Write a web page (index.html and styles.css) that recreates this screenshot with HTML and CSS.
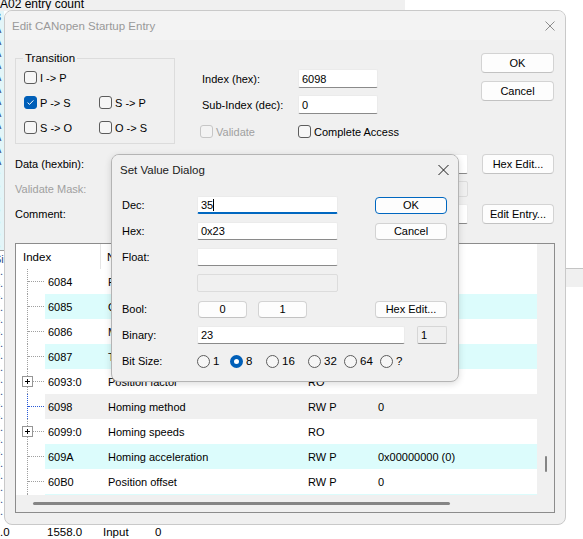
FILE: index.html
```html
<!DOCTYPE html>
<html lang="en">
<head>
    <meta charset="UTF-8">
    <title>Edit CANopen Startup Entry</title>
    <link rel="stylesheet" href="styles.css">
</head>
<body>
<div class="desktop">

    <!-- bits of the window behind the dialogs -->
    <div class="bg-top">A02 entry count</div>
    <div class="bg-strip">
        <div class="bg-strip-hi">
            <div>B</div><div>A</div><div>A</div><div>A</div><div>A</div><div>A</div><div>A</div><div>A</div><div>A</div><div>A</div>
            <div>A</div><div>A</div><div>A</div><div>e</div><div>6</div><div>6</div><div>6</div><div>6</div><div>6</div><div>6</div>
        </div>
        <div class="bg-strip-lo">
            <div>Si</div><div>2.</div><div>4.</div><div>4.</div><div>2.</div><div>4.</div><div>4.</div><div>0.</div><div>0.</div><div>2.</div>
            <div>3.</div><div>2.</div><div>4.</div><div>4.</div><div>2.</div><div>4.</div><div>4.</div><div>0.</div><div>0.</div><div>2.</div>
            <div>3.</div><div>2.</div>
        </div>
    </div>
    <div class="bg-band"></div>
    <div class="bg-status">
        <span class="st-1">.0</span><span class="st-2">1558.0</span><span class="st-3">Input</span><span>0</span>
    </div>

    <!-- Edit CANopen Startup Entry -->
    <div class="window main-win">
        <div class="titlebar">
            <span class="title">Edit CANopen Startup Entry</span>
            <svg class="close" width="10" height="10" viewBox="0 0 10 10"><path d="M0.5 0.5L9.5 9.5M9.5 0.5L0.5 9.5"/></svg>
        </div>

        <div class="top">
            <fieldset class="group">
                <legend>Transition</legend>
                <div class="trans-grid">
                    <span class="chk"><span class="box"></span>I -&gt; P</span>
                    <span></span>
                    <span class="chk"><span class="box on"><svg width="11" height="11" viewBox="0 0 11 11"><path d="M2.6 5.6L4.5 7.4L8.4 3.4"/></svg></span>P -&gt; S</span>
                    <span class="chk"><span class="box"></span>S -&gt; P</span>
                    <span class="chk"><span class="box"></span>S -&gt; O</span>
                    <span class="chk"><span class="box"></span>O -&gt; S</span>
                </div>
            </fieldset>

            <div class="fields">
                <span class="lbl">Index (hex):</span>
                <div class="edit">6098</div>
                <span class="lbl">Sub-Index (dec):</span>
                <div class="edit">0</div>
                <span class="chk disabled chk-row"><span class="box"></span>Validate</span>
                <span class="chk chk-row"><span class="box"></span>Complete Access</span>
            </div>

            <div class="btn-col">
                <button class="btn">OK</button>
                <button class="btn">Cancel</button>
            </div>
        </div>

        <div class="data-grid">
            <span class="lbl-s">Data (hexbin):</span>
            <div class="edit"></div>
            <button class="btn">Hex Edit...</button>
            <span class="lbl-s muted">Validate Mask:</span>
            <div class="edit off"></div>
            <span></span>
            <span class="lbl-s">Comment:</span>
            <div class="edit"></div>
            <button class="btn">Edit Entry...</button>
        </div>

        <div class="list">
            <div class="list-body">
                <div class="rows-area">
                    <div class="list-head">
                        <span class="h-idx">Index</span>
                        <span class="h-name">Name</span>
                        <span class="h-flags">Flags</span>
                        <span>Value</span>
                    </div>
                    <div class="row">
                        <span class="tree"></span>
                        <div class="cells"><span class="c-idx">6084</span><span class="c-name">Profile deceleration</span><span class="c-flags">RW P</span><span>0</span></div>
                    </div>
                    <div class="row cyan">
                        <span class="tree"></span>
                        <div class="cells"><span class="c-idx">6085</span><span class="c-name">Quick stop deceleration</span><span class="c-flags">RW P</span><span>0</span></div>
                    </div>
                    <div class="row">
                        <span class="tree"></span>
                        <div class="cells"><span class="c-idx">6086</span><span class="c-name">Motion profile type</span><span class="c-flags">RW P</span><span>0</span></div>
                    </div>
                    <div class="row cyan">
                        <span class="tree"></span>
                        <div class="cells"><span class="c-idx">6087</span><span class="c-name">Torque slope</span><span class="c-flags">RW P</span><span>0</span></div>
                    </div>
                    <div class="row">
                        <span class="tree"><svg class="plus" width="11" height="11" viewBox="0 0 11 11"><rect x="0.5" y="0.5" width="10" height="10"/><path d="M3 5.5H8M5.5 3V8"/></svg></span>
                        <div class="cells"><span class="c-idx">6093:0</span><span class="c-name">Position factor</span><span class="c-flags">RO</span><span></span></div>
                    </div>
                    <div class="row sel">
                        <span class="tree"></span>
                        <div class="cells"><span class="c-idx">6098</span><span class="c-name">Homing method</span><span class="c-flags">RW P</span><span>0</span></div>
                    </div>
                    <div class="row">
                        <span class="tree"><svg class="plus" width="11" height="11" viewBox="0 0 11 11"><rect x="0.5" y="0.5" width="10" height="10"/><path d="M3 5.5H8M5.5 3V8"/></svg></span>
                        <div class="cells"><span class="c-idx">6099:0</span><span class="c-name">Homing speeds</span><span class="c-flags">RO</span><span></span></div>
                    </div>
                    <div class="row cyan">
                        <span class="tree"></span>
                        <div class="cells"><span class="c-idx">609A</span><span class="c-name">Homing acceleration</span><span class="c-flags">RW P</span><span>0x00000000 (0)</span></div>
                    </div>
                    <div class="row">
                        <span class="tree"></span>
                        <div class="cells"><span class="c-idx">60B0</span><span class="c-name">Position offset</span><span class="c-flags">RW P</span><span>0</span></div>
                    </div>
                    <div class="row cyan">
                        <span class="tree"></span>
                        <div class="cells"><span class="c-idx">60C2:0</span><span class="c-name">Interpolation time period</span><span class="c-flags">RO</span><span></span></div>
                    </div>
                </div>
                <div class="vscroll"><span class="vthumb"></span></div>
            </div>
            <div class="hscroll"><span class="hthumb"></span></div>
        </div>
    </div>

    <!-- Set Value Dialog -->
    <div class="window setval">
        <div class="titlebar active">
            <span class="title">Set Value Dialog</span>
            <svg class="close" width="11" height="10" viewBox="0 0 11 10"><path d="M0.5 0L10.5 10M10.5 0L0.5 10"/></svg>
        </div>
        <div class="sv-grid">
            <span class="lbl-s">Dec:</span>
            <div class="edit focus">35<span class="caret"></span></div>
            <span></span>
            <button class="btn default">OK</button>

            <span class="lbl-s">Hex:</span>
            <div class="edit">0x23</div>
            <span></span>
            <button class="btn">Cancel</button>

            <span class="lbl-s">Float:</span>
            <div class="edit"></div>
            <span></span><span></span>

            <span></span>
            <div class="edit off"></div>
            <span></span><span></span>

            <span class="lbl-s">Bool:</span>
            <div class="bool-btns"><button class="btn">0</button><button class="btn">1</button></div>
            <span></span>
            <button class="btn">Hex Edit...</button>

            <span class="lbl-s">Binary:</span>
            <div class="binary"><div class="edit bin-edit">23</div><div class="edit ro">1</div></div>

            <span class="lbl-s">Bit Size:</span>
            <div class="radios">
                <span class="rad w33"><span class="dot"></span>1</span>
                <span class="rad w36"><span class="dot on"></span>8</span>
                <span class="rad w42"><span class="dot"></span>16</span>
                <span class="rad w36"><span class="dot"></span>32</span>
                <span class="rad w36"><span class="dot"></span>64</span>
                <span class="rad"><span class="dot"></span>?</span>
            </div>
        </div>
    </div>

</div>
</body>
</html>
```

FILE: styles.css
```css
* {
    box-sizing: border-box;
}
body {
    margin: 0;
    background: #fff;
    font-family: "Liberation Sans", Arial, sans-serif;
    font-size: 11px;
    color: #000;
}
.desktop {
    position: relative;
    width: 583px;
    height: 539px;
    overflow: hidden;
}

/* background window */
.bg-top {
    position: absolute;
    left: 0;
    top: 0;
    width: 405px;
    height: 11px;
    background: #f0f0f0;
    font-size: 12px;
    line-height: 8px;
    white-space: nowrap;
}
.bg-strip {
    position: absolute;
    left: 0;
    top: 11px;
    width: 4px;
    height: 514px;
    overflow: hidden;
    line-height: 12px;
    color: #2b4c86;
}
.bg-strip div {
    margin-left: -3px;
    white-space: nowrap;
}
.bg-strip-hi {
    background: #e3f5f8;
    height: 240px;
    border-bottom: 1px solid #a0a0a0;
}
.bg-strip-lo {
    padding-top: 2px;
}
.bg-band {
    position: absolute;
    left: 566px;
    top: 268px;
    width: 17px;
    height: 19px;
    background: #f0f0f0;
    border-top: 1px solid #c4c4c4;
}
.bg-status {
    position: absolute;
    left: 0;
    top: 525px;
    height: 14px;
    line-height: 14px;
    font-size: 11.5px;
    display: flex;
    white-space: nowrap;
}
.st-1 { width: 47px; }
.st-2 { width: 56px; }
.st-3 { width: 52px; }

/* windows */
.window {
    position: absolute;
    background: #f0f0f0;
    border: 1px solid #c9c9c9;
    border-radius: 8px;
    overflow: hidden;
}
.main-win {
    left: 4px;
    top: 10px;
    width: 562px;
    height: 515px;
}
.setval {
    left: 111px;
    top: 154px;
    width: 348px;
    height: 228px;
    border-color: #b4b4b4;
    box-shadow: 0 2px 7px rgba(0, 0, 0, 0.14);
}
.titlebar {
    height: 29px;
    display: flex;
    align-items: center;
    justify-content: space-between;
    background: #f3f3f3;
    padding: 0 10px 0 7px;
}
.titlebar .title {
    font-size: 11.5px;
    color: #999;
    white-space: nowrap;
}
.titlebar .close path {
    stroke: #8c8c8c;
    stroke-width: 1;
    fill: none;
}
.titlebar.active {
    background: #f0f0f0;
    padding: 0 9px 0 8px;
}
.titlebar.active .title {
    color: #1a1a1a;
}
.titlebar.active .close path {
    stroke: #1a1a1a;
}

/* controls */
.btn {
    font: inherit;
    color: #000;
    background: #fdfdfd;
    border: 1px solid #d3d3d3;
    border-bottom-color: #c2c2c2;
    border-radius: 4px;
    padding: 0;
    height: 20px;
    white-space: nowrap;
}
.btn.default {
    border-color: #0067c0;
}
.edit {
    background: #fff;
    border: 1px solid #ebebeb;
    border-bottom-color: #8a8a8a;
    border-radius: 2px;
    padding-left: 3px;
    display: flex;
    align-items: center;
    white-space: nowrap;
}
.edit.off {
    background: #f0f0f0;
    border-color: #dcdcdc;
}
.edit.focus {
    border-bottom: 2px solid #0067c0;
}
.caret {
    display: inline-block;
    width: 1px;
    height: 12px;
    background: #000;
}
.chk {
    display: flex;
    align-items: center;
    white-space: nowrap;
}
.chk .box {
    flex: none;
    width: 13px;
    height: 13px;
    border: 1px solid #5c5c5c;
    border-radius: 3px;
    background: #f6f6f6;
    margin-right: 3px;
    display: flex;
    align-items: center;
    justify-content: center;
}
.chk .box.on {
    background: #005fb8;
    border-color: #005fb8;
}
.chk .box svg path {
    stroke: #fff;
    stroke-width: 1;
    fill: none;
}
.chk.disabled {
    color: #a0a0a0;
}
.chk.disabled .box {
    border-color: #c6c6c6;
    background: #f3f3f3;
}
.lbl {
    padding-left: 2px;
    white-space: nowrap;
}
.lbl-s {
    white-space: nowrap;
    display: flex;
    align-items: center;
}
.muted {
    color: #a0a0a0;
}

/* main dialog layout */
.top {
    display: flex;
    align-items: flex-start;
    padding-top: 13px;
    height: 104px;
}
.group {
    margin: -2px 0 0 10px;
    width: 160px;
    border: 1px solid #dcdcdc;
    padding: 0 0 3px 7px;
}
.group legend {
    padding: 0 2px;
    line-height: 14px;
    font-size: 11.5px;
}
.trans-grid {
    margin-left: 1px;
    display: grid;
    grid-template-columns: 75px auto;
    grid-auto-rows: 25px;
    align-items: center;
}
.fields {
    margin: 16px 0 0 25px;
    display: grid;
    grid-template-columns: 98px 80px;
    grid-template-rows: 19px 19px;
    row-gap: 7px;
    align-items: center;
}
.fields .edit {
    height: 19px;
}
.chk-row {
    margin-top: 4px;
}
.btn-col {
    margin-left: auto;
    margin-right: 11px;
    width: 73px;
    display: flex;
    flex-direction: column;
    gap: 8px;
}
.data-grid {
    margin-top: 10px;
    padding-left: 10px;
    display: grid;
    grid-template-columns: 101px 338px 72px;
    column-gap: 14px;
    grid-template-rows: 20px 16px 20px;
    row-gap: 7px;
}
.data-grid .btn {
    height: 20px;
}
.list {
    margin: 19px 0 0 10px;
    width: 540px;
    height: 270px;
    border: 1px solid #8c8c8c;
    background: #fff;
    display: flex;
    flex-direction: column;
}
.list-body {
    display: flex;
    flex: 1;
    overflow: hidden;
}
.rows-area {
    flex: 1;
    overflow: hidden;
}
.list-head {
    height: 25px;
    display: flex;
    align-items: center;
    font-size: 11.5px;
}
.list-head span {
    height: 100%;
    display: flex;
    align-items: center;
}
.h-idx {
    width: 85px;
    padding-left: 7px;
    border-right: 1px solid #e5e5e5;
}
.h-name {
    width: 207px;
    padding-left: 6px;
}
.h-flags {
    width: 70px;
}
.row {
    height: 25px;
    display: flex;
}
.tree {
    position: relative;
    width: 29px;
    flex: none;
}
.tree::before {
    content: "";
    position: absolute;
    left: 11px;
    top: 0;
    bottom: 0;
    border-left: 1px dotted #a0a0a0;
}
.tree::after {
    content: "";
    position: absolute;
    left: 12px;
    top: 12px;
    width: 16px;
    border-top: 1px dotted #a0a0a0;
}
.row.sel .tree::before,
.row.sel .tree::after {
    border-color: #2a5bd7;
}
.plus {
    position: absolute;
    left: 6px;
    top: 7px;
    z-index: 1;
}
.plus rect {
    fill: #fff;
    stroke: #969696;
}
.plus path {
    stroke: #000;
    stroke-width: 1;
}
.cells {
    flex: 1;
    display: flex;
    align-items: center;
    white-space: nowrap;
}
.row.cyan .cells {
    background: #dcfcfc;
}
.row.sel .cells {
    background: #f0f0f0;
}
.c-idx {
    width: 63px;
    padding-left: 3px;
}
.c-name {
    width: 200px;
}
.c-flags {
    width: 70px;
}
.vscroll {
    position: relative;
    width: 17px;
    background: #f0f0f0;
}
.vthumb {
    position: absolute;
    left: 8px;
    top: 212px;
    width: 2px;
    height: 16px;
    background: #858585;
    border-radius: 1px;
}
.hscroll {
    position: relative;
    height: 17px;
    background: #f0f0f0;
}
.hthumb {
    position: absolute;
    left: 17px;
    top: 7px;
    width: 417px;
    height: 3px;
    background: #858585;
    border-radius: 2px;
}

/* set value dialog layout */
.sv-grid {
    padding: 12px 0 0 10px;
    display: grid;
    grid-template-columns: 75px 141px 37px 72px;
    grid-auto-rows: 18px;
    row-gap: 8px;
    align-items: center;
}
.sv-grid .edit {
    height: 18px;
}
.sv-grid .btn {
    height: 17px;
}
.bool-btns {
    display: flex;
    gap: 11px;
    margin-left: 1px;
}
.bool-btns .btn {
    width: 49px;
}
.binary {
    grid-column: 2 / 5;
    display: flex;
    gap: 12px;
}
.bin-edit {
    width: 208px;
}
.edit.ro {
    width: 30px;
    background: #f0f0f0;
    border-color: #d6d6d6;
    border-bottom-color: #9a9a9a;
}
.radios {
    grid-column: 2 / 5;
    display: flex;
    align-items: center;
    font-size: 11.5px;
}
.rad {
    display: flex;
    align-items: center;
    white-space: nowrap;
}
.w33 { width: 33px; }
.w36 { width: 36px; }
.w42 { width: 42px; }
.dot {
    width: 13px;
    height: 13px;
    border: 1px solid #5c5c5c;
    border-radius: 50%;
    background: #f6f6f6;
    margin-right: 3px;
}
.dot.on {
    border: 4px solid #005fb8;
    background: #fff;
}
```
